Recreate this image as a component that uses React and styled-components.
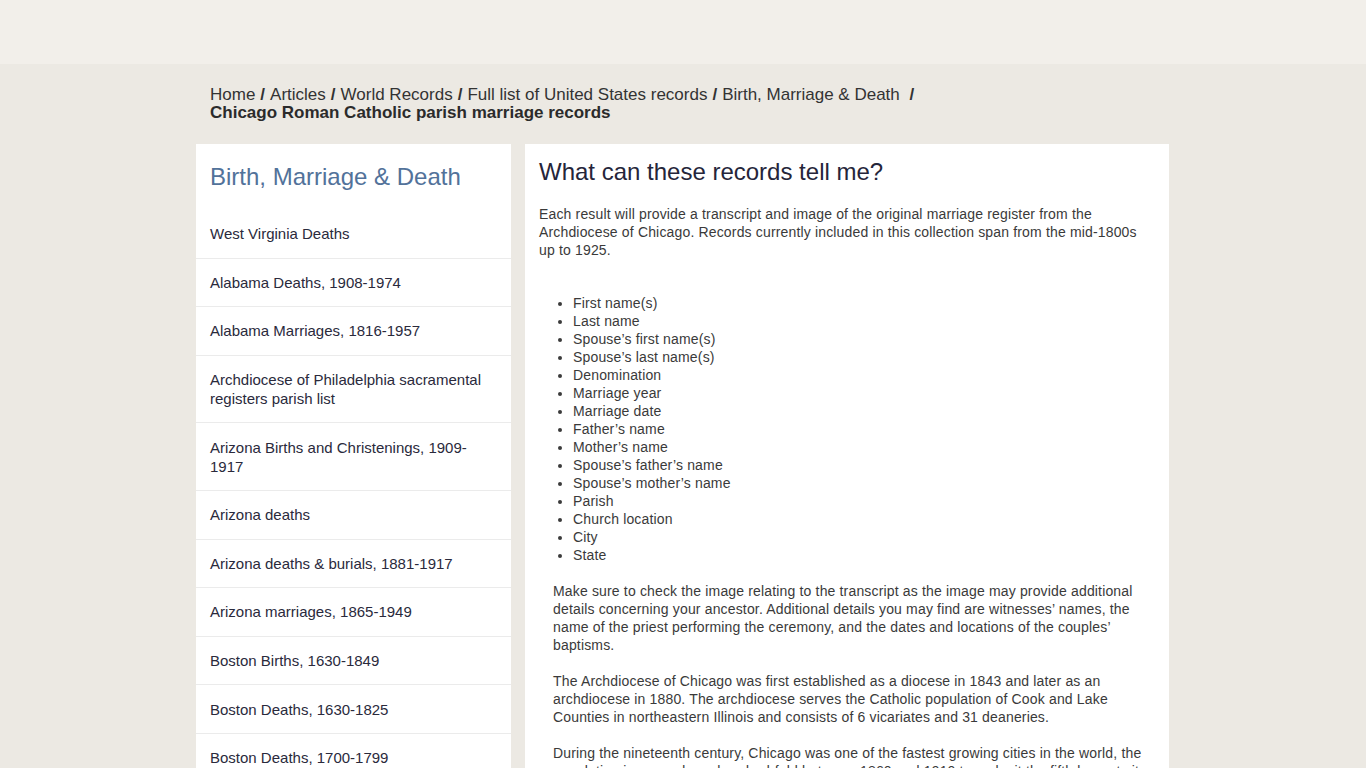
import React from "react";
import styled, { createGlobalStyle } from "styled-components";

const Global = createGlobalStyle`
  html, body { margin: 0; padding: 0; }
  body {
    background: #ece9e3;
    font-family: "Liberation Sans", Arial, sans-serif;
    color: #333;
  }
`;

const TopBar = styled.header`
  height: 64px;
  background: #f2efea;
`;

const Container = styled.div`
  width: 973px;
  padding-right: 1px;
  margin: 0 auto;
`;

const Breadcrumb = styled.nav`
  padding: 22px 14px 22px;
  font-size: 17px;
  line-height: 18px;
  color: #333;
`;

const Crumb = styled.a`
  color: #333;
  text-decoration: none;
`;

const Sep = styled.span`
  font-weight: bold;
  margin: 0 5px;
`;

const Current = styled.strong`
  display: block;
  font-size: 17px;
  font-weight: bold;
  color: #2b2b2b;
`;

const Row = styled.div`
  display: flex;
  gap: 14px;
  align-items: flex-start;
`;

const Sidebar = styled.aside`
  width: 315px;
  flex: 0 0 315px;
  background: #fff;
`;

const SideTitle = styled.h2`
  margin: 0;
  padding: 19px 14px 19px;
  font-size: 24px;
  line-height: 28px;
  font-weight: normal;
  color: #52729a;
`;

const SideList = styled.ul`
  list-style: none;
  margin: 0;
  padding: 0;
`;

const SideItem = styled.li`
  padding: 14.3px 14px 14.3px;
  font-size: 15px;
  line-height: 19px;
  color: #2a2a3c;
  border-bottom: 1px solid #ebebeb;
`;

const Main = styled.main`
  flex: 1;
  background: #fff;
  padding: 14px 14px 20px;
  min-height: 700px;
`;

const Heading = styled.h1`
  margin: 0 0 19px;
  font-size: 24px;
  line-height: 28px;
  font-weight: normal;
  color: #25253a;
`;

const Para = styled.p`
  margin: 0 0 ${(p) => p.$mb || 18}px;
  padding-left: ${(p) => (p.$indent ? 14 : 0)}px;
  font-size: 14px;
  line-height: 18px;
  letter-spacing: 0.16px;
  color: #3a3a3a;
`;

const Bullets = styled.ul`
  margin: 0 0 18px;
  padding-left: 34px;
  font-size: 14px;
  line-height: 18px;
  letter-spacing: 0.16px;
  color: #3a3a3a;
  list-style: disc;
`;

const crumbs = [
  "Home",
  "Articles",
  "World Records",
  "Full list of United States records",
];

const sideItems = [
  "West Virginia Deaths",
  "Alabama Deaths, 1908-1974",
  "Alabama Marriages, 1816-1957",
  "Archdiocese of Philadelphia sacramental registers parish list",
  "Arizona Births and Christenings, 1909-1917",
  "Arizona deaths",
  "Arizona deaths & burials, 1881-1917",
  "Arizona marriages, 1865-1949",
  "Boston Births, 1630-1849",
  "Boston Deaths, 1630-1825",
  "Boston Deaths, 1700-1799",
  "Boston Marriages, 1630-1699",
];

const fields = [
  "First name(s)",
  "Last name",
  "Spouse’s first name(s)",
  "Spouse’s last name(s)",
  "Denomination",
  "Marriage year",
  "Marriage date",
  "Father’s name",
  "Mother’s name",
  "Spouse’s father’s name",
  "Spouse’s mother’s name",
  "Parish",
  "Church location",
  "City",
  "State",
];

export default function App() {
  return (
    <>
      <Global />
      <TopBar />
      <Container>
        <Breadcrumb>
          {crumbs.map((c) => (
            <React.Fragment key={c}>
              <Crumb href="#">{c}</Crumb>
              <Sep>/</Sep>
            </React.Fragment>
          ))}
          <Crumb href="#">Birth, Marriage &amp; Death</Crumb>
          {"\u00a0"}
          <Sep>/</Sep>
          <Current>Chicago Roman Catholic parish marriage records</Current>
        </Breadcrumb>
        <Row>
          <Sidebar>
            <SideTitle>Birth, Marriage &amp; Death</SideTitle>
            <SideList>
              {sideItems.map((s) => (
                <SideItem key={s}>{s}</SideItem>
              ))}
            </SideList>
          </Sidebar>
          <Main>
            <Heading>What can these records tell me?</Heading>
            <Para $mb={35}>
              Each result will provide a transcript and image of the original
              marriage register from the Archdiocese of Chicago. Records
              currently included in this collection span from the mid-1800s up
              to 1925.
            </Para>
            <Bullets>
              {fields.map((f) => (
                <li key={f}>{f}</li>
              ))}
            </Bullets>
            <Para $indent>
              Make sure to check the image relating to the transcript as the
              image may provide additional details concerning your ancestor.
              Additional details you may find are witnesses’ names, the name of
              the priest performing the ceremony, and the dates and locations
              of the couples’ baptisms.
            </Para>
            <Para $indent>
              The Archdiocese of Chicago was first established as a diocese in
              1843 and later as an archdiocese in 1880. The archdiocese serves
              the Catholic population of Cook and Lake Counties in northeastern
              Illinois and consists of 6 vicariates and 31 deaneries.
            </Para>
            <Para $indent>
              During the nineteenth century, Chicago was one of the fastest
              growing cities in the world, the population increased one
              hundred-fold between 1860 and 1910 to make it the fifth largest
              city in the world.
            </Para>
          </Main>
        </Row>
      </Container>
    </>
  );
}
